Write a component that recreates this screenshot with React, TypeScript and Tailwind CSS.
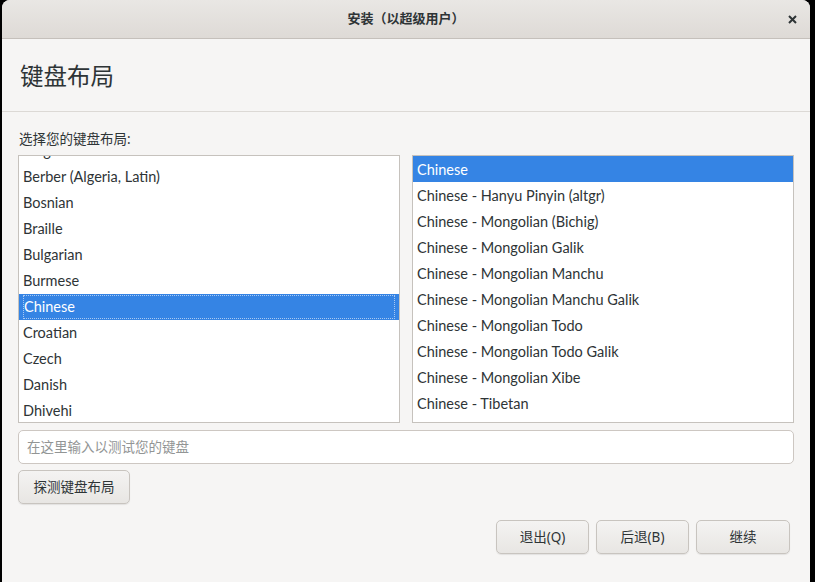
import React from "react";

const left = [
  "Belgian",
  "Berber (Algeria, Latin)",
  "Bosnian",
  "Braille",
  "Bulgarian",
  "Burmese",
  "Chinese",
  "Croatian",
  "Czech",
  "Danish",
  "Dhivehi",
  "Dutch",
];
const right = [
  "Chinese",
  "Chinese - Hanyu Pinyin (altgr)",
  "Chinese - Mongolian (Bichig)",
  "Chinese - Mongolian Galik",
  "Chinese - Mongolian Manchu",
  "Chinese - Mongolian Manchu Galik",
  "Chinese - Mongolian Todo",
  "Chinese - Mongolian Todo Galik",
  "Chinese - Mongolian Xibe",
  "Chinese - Tibetan",
  "Chinese - Tibetan (with ASCII numerals)",
];

const font = { fontFamily: '"Noto Sans", "Noto Sans CJK SC", sans-serif' };
const listFont = { fontFamily: 'Lato, "Noto Sans", "Noto Sans CJK SC", sans-serif' };

function Btn({ children, w }: { children: React.ReactNode; w: string }) {
  return (
    <button
      className={`${w} h-[34px] rounded-[5px] border border-[#c8c4bf] bg-gradient-to-b from-[#f4f3f2] to-[#e8e6e3] text-[13.5px] text-[#2e3436] shadow-[0_1px_1px_rgba(0,0,0,0.08)] flex items-center justify-center`}
    >
      {children}
    </button>
  );
}

export default function App() {
  return (
    <div className="w-[815px] h-[582px] bg-black flex overflow-hidden" style={font}>
      <div className="ml-[2px] w-[808px] h-[582px] bg-[#f6f5f4] rounded-t-[8px] flex flex-col overflow-hidden">
        <div className="h-[39px] shrink-0 bg-gradient-to-b from-[#e9e7e4] to-[#dedad6] border-b border-[#c5c0bb] flex items-center justify-center relative">
          <span className="text-[13px] font-bold text-[#2e3436]">安装（以超级用户）</span>
          <svg className="absolute right-[13px] top-[15px]" width="9" height="9" viewBox="0 0 9 9">
            <path d="M1 1L8 8M8 1L1 8" stroke="#2e3436" strokeWidth="2" />
          </svg>
        </div>
        <div className="h-[73px] shrink-0 border-b border-[#dcd9d5] flex items-center pl-[18px]">
          <span className="text-[23.5px] text-[#2e3436] leading-none mt-[3px]">键盘布局</span>
        </div>
        <div className="px-[16px] flex flex-col">
          <div className="h-[43px] flex items-end pb-[6px] pl-[1px] text-[13.5px] text-[#2e3436]">
            选择您的键盘布局:
          </div>
          <div className="flex gap-[12px] h-[268px]" style={listFont}>
            <div className="w-[382px] border border-[#c6c2bd] bg-white overflow-hidden">
              <div className="mt-[-18px]">
                {left.map((t) => (
                  <div
                    key={t}
                    className={`h-[26px] flex items-center px-[4px] text-[14.5px] ${
                      t === "Chinese" ? "bg-[#3584e4] text-white" : "text-[#2e3436]"
                    }`}
                  >
                    <div
                      className={`w-full h-[24px] flex items-center ${
                        t === "Chinese" ? "border border-dotted border-[#a9c9f2]" : ""
                      }`}
                    >
                      {t}
                    </div>
                  </div>
                ))}
              </div>
            </div>
            <div className="w-[382px] border border-[#c6c2bd] bg-white overflow-hidden">
              {right.map((t, i) => (
                <div
                  key={t}
                  className={`h-[26px] flex items-center px-[4px] pt-[2px] text-[14.5px] ${
                    i === 0 ? "bg-[#3584e4] text-white" : "text-[#2e3436]"
                  }`}
                >
                  {t}
                </div>
              ))}
            </div>
          </div>
          <div className="mt-[7px] h-[34px] w-[776px] rounded-[5px] border border-[#cdc7c2] bg-white flex items-center px-[8px] text-[13.5px] leading-[20px] text-[#929595]">
            在这里输入以测试您的键盘
          </div>
          <div className="mt-[6px]">
            <Btn w="w-[112px]">探测键盘布局</Btn>
          </div>
          <div className="mt-[16px] flex justify-end gap-[7px] pr-[4px]">
            <Btn w="w-[93px]">退出(Q)</Btn>
            <Btn w="w-[93px]">后退(B)</Btn>
            <Btn w="w-[94px]">继续</Btn>
          </div>
        </div>
      </div>
    </div>
  );
}
